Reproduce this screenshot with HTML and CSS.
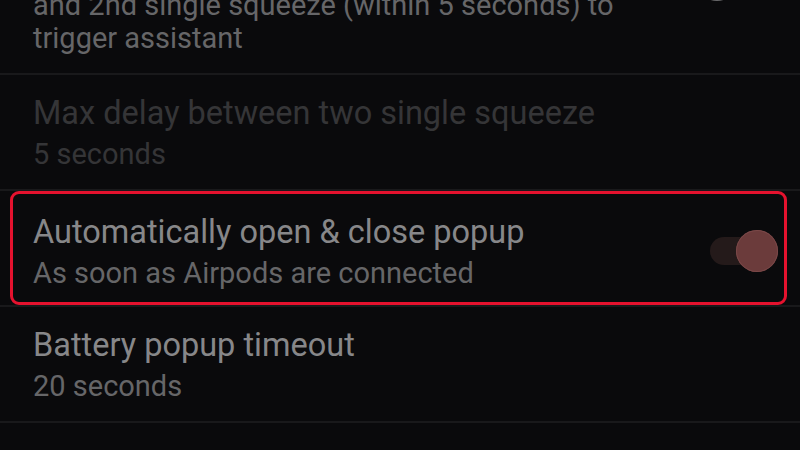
FILE: index.html
```html
<!DOCTYPE html>
<html lang="en">
<head>
  <meta charset="UTF-8" />
  <meta name="viewport" content="width=device-width, initial-scale=1.0"/>
  <title>Popup settings</title>
  <link rel="stylesheet" href="styles.css">
</head>
<body>
  <div class="screen">
    <div class="list">
      <!-- Squeeze to assistant (scrolled partly out of view) -->
      <div class="pref">
        <div class="pref-text">
          <div class="pref-title">Squeeze to trigger assistant</div>
          <div class="pref-summary">Double squeeze: wait between 1st<br>and 2nd single squeeze (within 5 seconds) to<br>trigger assistant</div>
        </div>
        <div class="toggle off"><span class="thumb"></span></div>
      </div>

      <div class="pref disabled">
        <div class="pref-text">
          <div class="pref-title">Max delay between two single squeeze</div>
          <div class="pref-summary">5 seconds</div>
        </div>
      </div>

      <!-- Highlighted row -->
      <div class="highlight-row">
        <div class="highlight">
          <div class="pref">
            <div class="pref-text">
              <div class="pref-title">Automatically open &amp; close popup</div>
              <div class="pref-summary">As soon as Airpods are connected</div>
            </div>
            <div class="toggle on"><span class="thumb"></span></div>
          </div>
        </div>
      </div>

      <div class="pref">
        <div class="pref-text">
          <div class="pref-title">Battery popup timeout</div>
          <div class="pref-summary">20 seconds</div>
        </div>
      </div>
    </div>
  </div>
</body>
</html>
```

FILE: styles.css
```css
body {
  margin: 0;
  font-family: Roboto, "Noto Sans", sans-serif;
  background-color: #0a0a0c;
  color: #878789;
}

.screen {
  width: 800px;
  height: 450px;
  overflow: hidden;
}

.list {
  margin-top: -107px;
}

.pref {
  display: flex;
  align-items: center;
  padding: 18px 22px 18px 33px;
  border-bottom: 2px solid #19191b;
}

.pref-text {
  max-width: 660px;
}

.pref-title {
  font-size: 32.5px;
  line-height: 40px;
}

.pref-summary {
  font-size: 29px;
  line-height: 33px;
  margin-top: 5px;
  color: #666668;
}

.disabled .pref-title,
.disabled .pref-summary {
  color: #353537;
}

.highlight-row {
  border-bottom: 2px solid #19191b;
}

.highlight {
  margin: 0 13px 0 10px;
  border: 3px solid #e5122e;
  border-radius: 9px;
}

.highlight .pref {
  padding: 18px 12px 12px 20px;
  border-bottom: none;
}

.toggle {
  position: relative;
  margin-left: auto;
  width: 62px;
  height: 28px;
  border-radius: 14px;
  background-color: #241a1a;
}

.toggle .thumb {
  position: absolute;
  top: -7px;
  width: 42px;
  height: 42px;
  border-radius: 50%;
}

.toggle.on .thumb {
  right: -6px;
  background-color: #6b3b3b;
  box-shadow: inset 0 0 0 1px #7a4848;
}

.toggle.off {
  background-color: #1c1c1e;
}

.toggle.off .thumb {
  top: -10px;
  left: -20px;
  background-color: #6a6a6c;
}
```
